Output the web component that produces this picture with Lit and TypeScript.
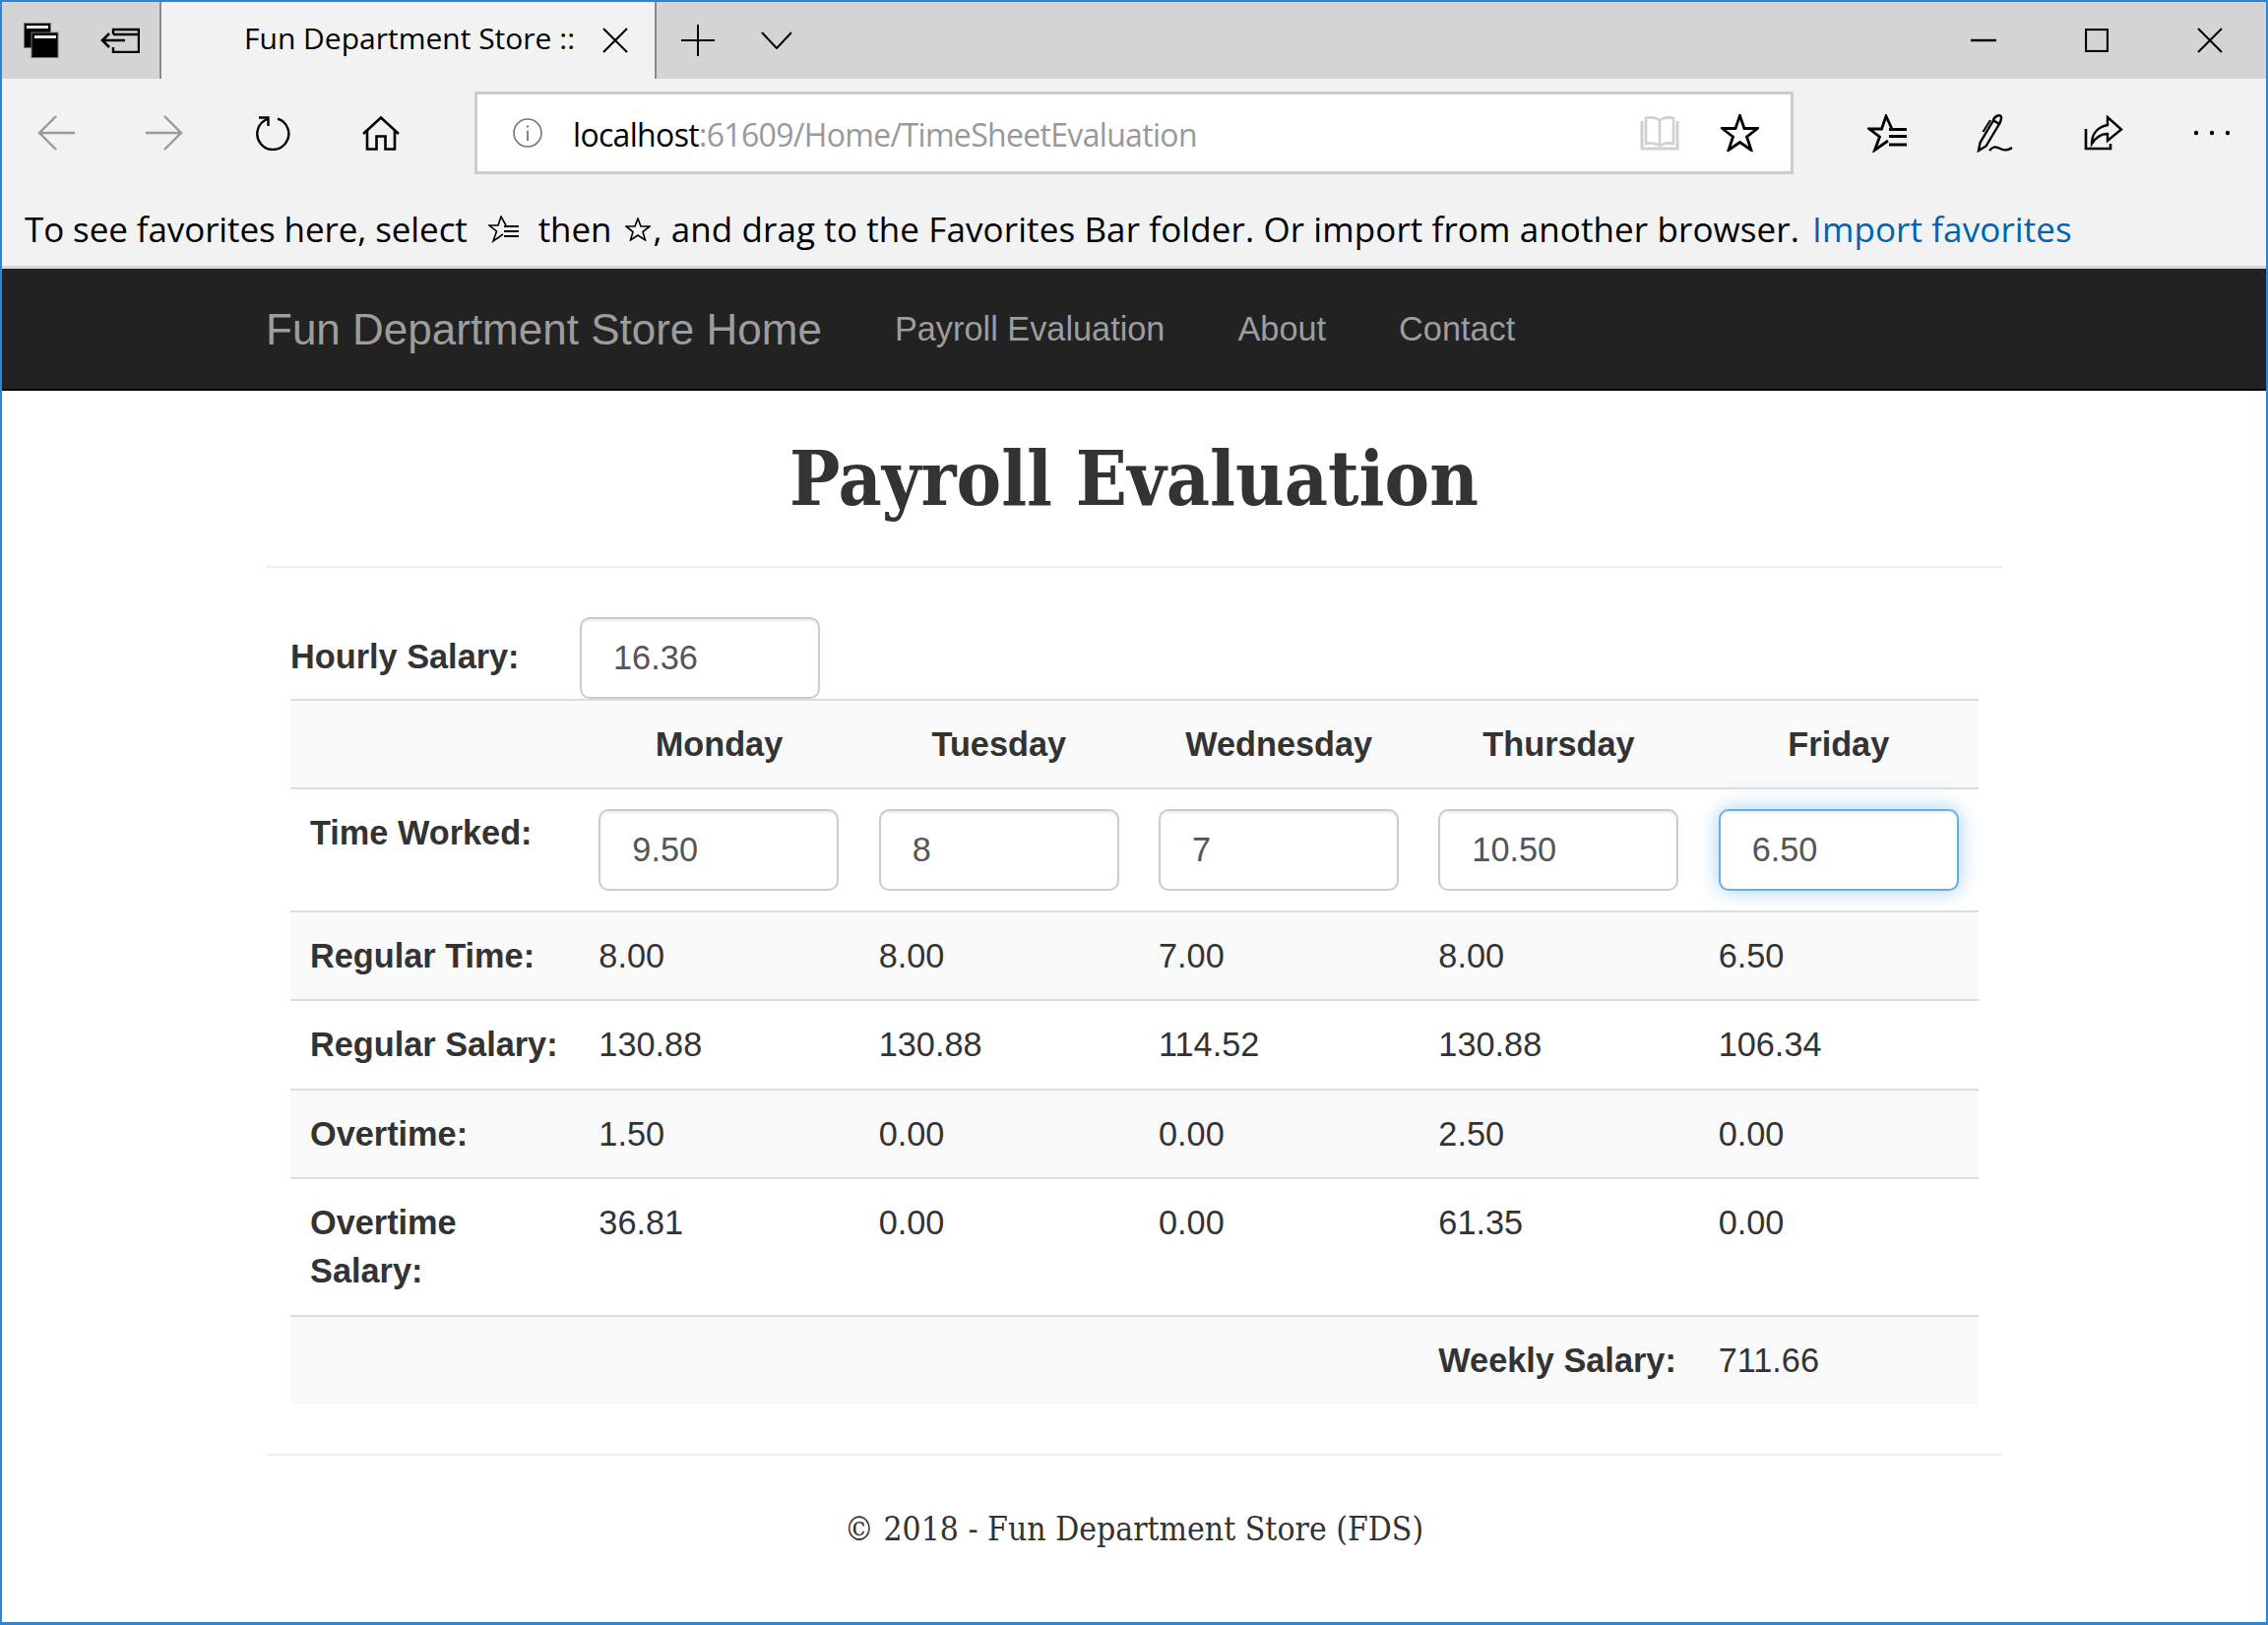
import { LitElement, html, css, svg } from "lit";
import { customElement } from "lit/decorators.js";

const ic = (w: number, h: number, body: unknown, cls = "") =>
  html`<svg class=${cls} width=${w} height=${h} viewBox="0 0 ${w} ${h}" fill="none" stroke="currentColor" stroke-width="2.4">${body}</svg>`;

const starPts = "19.5,1.5 24,14.5 37.5,14.5 26.5,23 31,36.5 19.5,28.5 8,36.5 12.5,23 1.5,14.5 15,14.5";

const icons = {
  tabs: ic(36, 36, svg`<rect x="0.5" y="0.5" width="27" height="25" fill="#000" stroke="#777" stroke-width="1"/><rect x="3" y="3" width="22" height="3" fill="#e6e6e6" stroke="none"/><rect x="8" y="10" width="27" height="25.5" fill="#000" stroke="#777" stroke-width="1"/><rect x="11" y="13" width="22" height="3" fill="#e6e6e6" stroke="none"/>`),
  aside: ic(40, 26, svg`<path d="M13 7V2H39V25H13V20M13 7H39" /><path d="M25 13H2M9 6L2 13L9 20" stroke-width="2.6"/>`),
  close: ic(26, 26, svg`<path d="M1 1L25 25M25 1L1 25" stroke-width="2"/>`),
  plus: ic(34, 32, svg`<path d="M17 0V32M0 16H34" stroke-width="2"/>`),
  chevron: ic(32, 18, svg`<path d="M1 1L16 17L31 1" stroke-width="2"/>`),
  min: ic(26, 4, svg`<path d="M0 2H26" stroke-width="2.4"/>`),
  max: ic(24, 24, svg`<rect x="1" y="1" width="22" height="22" stroke-width="2.2"/>`),
  back: ic(38, 36, svg`<path d="M38 18H2M19 1L2 18L19 35" stroke-width="2.4"/>`),
  fwd: ic(38, 36, svg`<path d="M0 18H36M19 1L36 18L19 35" stroke-width="2.4"/>`),
  refresh: ic(36, 35, svg`<path d="M12.5 3A16 16 0 1 0 23 2.6" stroke-width="2.4"/><path d="M4 1.5H13.5V10" stroke-width="2.4"/>`),
  home: ic(38, 35, svg`<path d="M1 18L19 1.5L37 18" stroke-width="2.6"/><path d="M5 14V33.5H14.5V20.5H23.5V33.5H33V14" stroke-width="2.6"/>`),
  info: ic(30, 30, svg`<circle cx="15" cy="15" r="14" stroke-width="1.6"/><path d="M15 12.5V23" stroke-width="1.8"/><path d="M15 7.5V9.5" stroke-width="2"/>`),
  book: ic(40, 36, svg`<path d="M20 5C15 2 10 2 6 3V29C10 28 15 28 20 31C25 28 30 28 34 29V3C30 2 25 2 20 5V31" stroke-width="2.6"/><path d="M2 6V34H38V6" stroke-width="3"/>`),
  star: ic(39, 38, svg`<polygon points=${starPts} stroke-width="2.8"/>`),
  favs: ic(40, 39, svg`<path d="M25 15L19 2L14.5 15H2L12.5 23L7.5 36.5L21 27" stroke-width="2.8"/><path d="M22 15.5H40M22 22.5H40M22 31H40" stroke-width="3"/>`),
  pen: ic(38, 39, svg`<path d="M2 37L3.5 29L17 6.5L23 10L9.5 32.5Z" stroke-width="2.4"/><path d="M17 6C19 1 24 0 25 3C25.5 5 24.5 7 23 10" stroke-width="2.4"/><path d="M14 6L6.5 18" stroke-width="2"/><path d="M13 37C17 32 20 33 24 35C28 37 32 37 36 34" stroke-width="2.4"/>`),
  share: ic(40, 36, svg`<path d="M2 14V34H27V29" stroke-width="2.6"/><path d="M8 29C8 19 14 12 24 10V2L38 14.5L24 26V19C17 18.5 12 23 8 29Z" stroke-width="2.4"/>`),
  dots: ic(38, 6, svg`<circle cx="3" cy="3" r="2.2" fill="currentColor" stroke="none"/><circle cx="19" cy="3" r="2.2" fill="currentColor" stroke="none"/><circle cx="35" cy="3" r="2.2" fill="currentColor" stroke="none"/>`),
  favsSmall: ic(32, 28, svg`<path d="M18 10L13 1L10 10H1L8.5 16L5 26L15 19" stroke-width="1.6"/><path d="M16 11H31M16 16H31M16 21H31" stroke-width="1.8"/>`),
  starSmall: ic(26, 24, svg`<polygon points="13,1 16,9 25,9 18,14.5 20.5,23 13,18 5.5,23 8,14.5 1,9 10,9" stroke-width="1.6"/>`),
};

const rows: { label: string; values: string[]; striped: boolean }[] = [
  { label: "Regular Time:", values: ["8.00", "8.00", "7.00", "8.00", "6.50"], striped: true },
  { label: "Regular Salary:", values: ["130.88", "130.88", "114.52", "130.88", "106.34"], striped: false },
  { label: "Overtime:", values: ["1.50", "0.00", "0.00", "2.50", "0.00"], striped: true },
  { label: "Overtime Salary:", values: ["36.81", "0.00", "0.00", "61.35", "0.00"], striped: false },
];

@customElement("app-root")
export class AppRoot extends LitElement {
  static styles = css`
    :host {
      display: block;
      width: 2304px;
      height: 1651px;
      box-sizing: border-box;
      border: solid #2a87d6;
      border-width: 2px 2px 3px 2px;
      overflow: hidden;
      background: #fff;
      color: #333;
      font-family: "Liberation Sans", Arial, sans-serif;
      font-size: 34.3px;
      line-height: 49px;
    }
    .chrome { font-family: "Open Sans", sans-serif; color: #000; }
    .tabbar { display: flex; height: 78px; background: #d4d4d4; }
    .slot { display: flex; align-items: center; justify-content: center; flex: none; }
    .s81 { width: 80px; }
    .s84 { width: 84px; }
    .s80 { width: 75px; }
    .s115 { width: 115px; }
    .tab {
      display: flex;
      align-items: center;
      flex: none;
      box-sizing: border-box;
      width: 505px;
      padding: 0 27px 0 84px;
      background: #f2f2f2;
      border: solid #8a8a8a;
      border-width: 0 2px;
      font-size: 30px;
      justify-content: space-between;
    }
    .tab span { margin-top: -5px; }
    .spacer { flex: 1; }
    .toolbar { display: flex; align-items: center; height: 110px; background: #f2f2f2; }
    .s110 { width: 110px; }
    .grey { color: #999; }
    .addr {
      display: flex;
      align-items: center;
      box-sizing: border-box;
      width: 1340px;
      height: 84px;
      margin: 0 40px 0 40px;
      padding: 0 32px 0 36px;
      background: #fff;
      border: 3px solid #cdcdcd;
      font-size: 32px;
      letter-spacing: -0.68px;
      line-height: 78px;
    }
    .info { display: flex; color: #777; margin-right: 31px; }
    .url { flex: 1; color: #999; white-space: nowrap; padding-top: 4px; }
    .url b { font-weight: 400; color: #000; }
    .book { display: flex; color: #d0d0d0; margin-right: 42px; }
    .favbar {
      display: flex;
      align-items: center;
      box-sizing: border-box;
      height: 83px;
      padding: 5px 0 0 23px;
      background: #f2f2f2;
      border-bottom: 3px solid #d6d6d6;
      font-size: 35px;
      letter-spacing: -0.1px;
      white-space: nowrap;
    }
    .favbar svg { flex: none; display: block; }
    .fav-a { margin-left: 21px; margin-right: 19px; }
    .fav-b { margin-left: 14px; margin-right: 2px; }
    .fav-c { letter-spacing: 0.1px; }
    .link { color: #0063b1; margin-left: 13px; letter-spacing: 0.1px; }
    .nav {
      display: flex;
      align-items: center;
      box-sizing: border-box;
      height: 124px;
      padding-left: 268px;
      background: #222;
      border-bottom: 2px solid #080808;
      color: #9d9d9d;
      white-space: nowrap;
    }
    .brand { font-size: 44px; padding-right: 37px; }
    .nav a { padding: 0 37px; }
    .page { width: 1764px; margin-left: 268px; }
    h1 {
      margin: 0;
      height: 180px;
      box-sizing: border-box;
      padding-top: 48px;
      border-bottom: 2px solid #eee;
      text-align: center;
      font-family: "DejaVu Serif", "Liberation Serif", serif;
      font-stretch: condensed;
      font-size: 76px;
      line-height: 84px;
      font-weight: 700;
    }
    .body { padding: 49px 25px 0; }
    .hourly { display: flex; align-items: center; height: 84px; }
    .hourly label { width: 294px; font-weight: 700; margin-top: -2px; }
    input {
      display: block;
      box-sizing: border-box;
      width: 244px;
      height: 83px;
      padding: 0 29px 0 32px;
      border: 2.45px solid #ccc;
      border-radius: 10px;
      background: #fff;
      color: #555;
      font: 34.3px "Liberation Sans", Arial, sans-serif;
      box-shadow: inset 0 2px 2px rgba(0, 0, 0, 0.075);
      outline: none;
    }
    input.focus {
      border-color: #66afe9;
      box-shadow: inset 0 2px 2px rgba(0, 0, 0, 0.075), 0 0 20px rgba(102, 175, 233, 0.6);
    }
    table { width: 1715px; border-collapse: separate; border-spacing: 0; table-layout: fixed; }
    col.first { width: 293px; }
    col.day { width: 284px; }
    td, th {
      border-top: 2px solid #ddd;
      padding: 20px 20px 19.6px;
      vertical-align: top;
      text-align: left;
    }
    td.lbl { font-weight: 700; }
    th { text-align: center; font-weight: 700; padding-top: 20px; padding-bottom: 19px; }
    tr.striped > * { background: #f9f9f9; }
    .nowrap { white-space: nowrap; }
    .footer {
      margin-top: 50px;
      border-top: 2px solid #eee;
      padding-top: 50px;
      text-align: center;
      font-family: "DejaVu Serif", "Liberation Serif", serif;
      font-stretch: condensed;
      font-size: 33.4px;
      line-height: 50px;
      font-variant-numeric: oldstyle-nums;
    }
  `;

  render() {
    const days = ["Monday", "Tuesday", "Wednesday", "Thursday", "Friday"];
    const worked = ["9.50", "8", "7", "10.50", "6.50"];
    return html`
      <div class="chrome">
        <div class="tabbar">
          <div class="slot s81">${icons.tabs}</div>
          <div class="slot s81">${icons.aside}</div>
          <div class="tab"><span>Fun Department Store ::</span>${icons.close}</div>
          <div class="slot s84">${icons.plus}</div>
          <div class="slot s80">${icons.chevron}</div>
          <div class="spacer"></div>
          <div class="slot s115">${icons.min}</div>
          <div class="slot s115">${icons.max}</div>
          <div class="slot s115">${icons.close}</div>
        </div>
        <div class="toolbar">
          <div class="slot s110 grey">${icons.back}</div>
          <div class="slot s110 grey">${icons.fwd}</div>
          <div class="slot s110">${icons.refresh}</div>
          <div class="slot s110">${icons.home}</div>
          <div class="addr">
            <span class="info">${icons.info}</span>
            <span class="url"><b>localhost</b>:61609/Home/TimeSheetEvaluation</span>
            <span class="book">${icons.book}</span>
            ${icons.star}
          </div>
          <div class="slot s110">${icons.favs}</div>
          <div class="slot s110">${icons.pen}</div>
          <div class="slot s110">${icons.share}</div>
          <div class="slot s110">${icons.dots}</div>
        </div>
        <div class="favbar">
          <span>To see favorites here, select</span>
          <span class="fav-a">${icons.favsSmall}</span>
          <span>then</span>
          <span class="fav-b">${icons.starSmall}</span>
          <span class="fav-c">, and drag to the Favorites Bar folder. Or import from another browser.</span>
          <span class="link">Import favorites</span>
        </div>
      </div>
      <nav class="nav">
        <span class="brand">Fun Department Store Home</span>
        <a>Payroll Evaluation</a>
        <a>About</a>
        <a>Contact</a>
      </nav>
      <main class="page">
        <h1>Payroll Evaluation</h1>
        <div class="body">
          <div class="hourly"><label>Hourly Salary:</label><input .value=${"16.36"} /></div>
          <table>
            <colgroup><col class="first" /><col class="day" /><col class="day" /><col class="day" /><col class="day" /><col class="day" /></colgroup>
            <tr class="striped"><th></th>${days.map((d) => html`<th>${d}</th>`)}</tr>
            <tr>
              <td class="lbl">Time Worked:</td>
              ${worked.map((v, i) => html`<td><input class=${i === 4 ? "focus" : ""} .value=${v} /></td>`)}
            </tr>
            ${rows.map(
              (r) => html`<tr class=${r.striped ? "striped" : ""}>
                <td class="lbl">${r.label}</td>
                ${r.values.map((v) => html`<td>${v}</td>`)}
              </tr>`
            )}
            <tr class="striped">
              <td colspan="4"></td>
              <td class="lbl nowrap">Weekly Salary:</td>
              <td>711.66</td>
            </tr>
          </table>
        </div>
        <div class="footer">© 2018 - Fun Department Store (FDS)</div>
      </main>
    `;
  }
}
